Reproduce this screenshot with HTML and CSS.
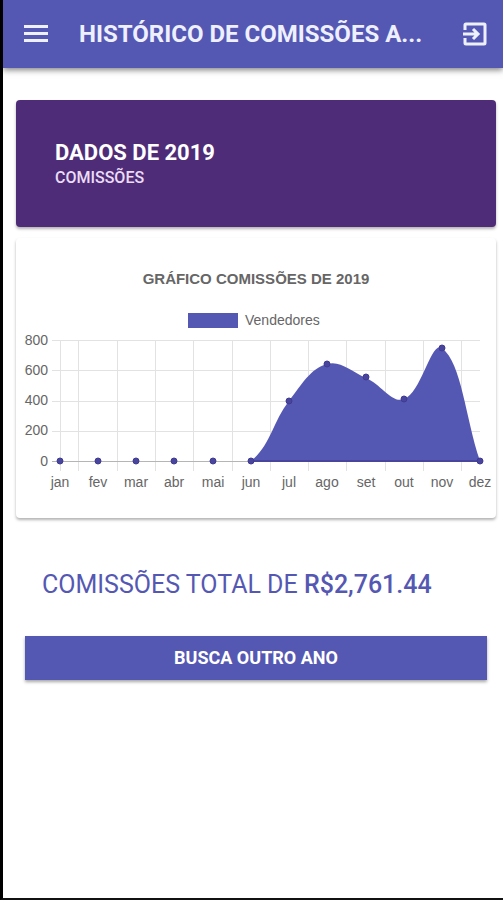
FILE: index.html
```html
<!DOCTYPE html>
<html lang="pt-BR">
<head>
    <meta charset="utf-8">
    <meta name="viewport" content="width=device-width, initial-scale=1">
    <title>Histórico de Comissões</title>
    <link rel="stylesheet" href="styles.css">
</head>
<body>

    <header class="toolbar">
        <button type="button" class="icon-button" aria-label="Menu">
            <svg width="24" height="24" viewBox="0 0 24 24">
                <path d="M0 3h24v3H0zM0 10h24v3H0zM0 17h24v3H0z" fill="currentColor"/>
            </svg>
        </button>
        <h1 class="title">HISTÓRICO DE COMISSÕES A...</h1>
        <button type="button" class="icon-button" aria-label="Sair">
            <svg width="24" height="24" viewBox="0 0 24 24" fill="none" stroke="currentColor" stroke-width="3">
                <path d="M2 8V3a1 1 0 0 1 1-1h18a1 1 0 0 1 1 1v18a1 1 0 0 1-1 1H3a1 1 0 0 1-1-1v-5"/>
                <path d="M0 12h15M10 7l5 5-5 5"/>
            </svg>
        </button>
    </header>

    <main class="content">
        <section class="card year-card">
            <h2>DADOS DE 2019</h2>
            <p>COMISSÕES</p>
        </section>

        <section class="card">
            <svg class="chart" viewBox="0 0 480 280" role="img" aria-label="Gráfico de comissões">
                <text class="chart-title" x="240" y="46">GRÁFICO COMISSÕES DE 2019</text>
                <rect class="area" x="172" y="75" width="50" height="15"/>
                <text x="229" y="87">Vendedores</text>

                <!-- grid -->
                <path class="grid" d="M36 102H464M36 132H464M36 163H464M36 193H464"/>
                <path class="grid" d="M44 102V233M62 102V233M101 102V233M139 102V233M177 102V233M216 102V233M254 102V233M292 102V233M330 102V233M369 102V233M407 102V233M445 102V233"/>
                <path class="grid zero" d="M36 223H464"/>

                <g class="y-labels">
                    <text x="32" y="107">800</text>
                    <text x="32" y="137">600</text>
                    <text x="32" y="167">400</text>
                    <text x="32" y="197">200</text>
                    <text x="32" y="228">0</text>
                </g>

                <!-- jun to dez -->
                <path class="area" d="M235 223C255 207 256 185 273 163C286 146 294 131 311 126C324 122 335 133 350 140C366 147 376 166 388 161C406 154 415 102 426 110C446 126 449 178 464 223Z"/>
                <path class="line" d="M235 223H464"/>
                <g class="points">
                    <circle cx="44" cy="223" r="3"/>
                    <circle cx="82" cy="223" r="3"/>
                    <circle cx="120" cy="223" r="3"/>
                    <circle cx="158" cy="223" r="3"/>
                    <circle cx="197" cy="223" r="3"/>
                    <circle cx="235" cy="223" r="3"/>
                    <circle cx="273" cy="163" r="3"/>
                    <circle cx="311" cy="126" r="3"/>
                    <circle cx="350" cy="139" r="3"/>
                    <circle cx="388" cy="161" r="3"/>
                    <circle cx="426" cy="110" r="3"/>
                    <circle cx="464" cy="223" r="3"/>
                </g>

                <g class="x-labels">
                    <text x="44" y="249">jan</text>
                    <text x="82" y="249">fev</text>
                    <text x="120" y="249">mar</text>
                    <text x="158" y="249">abr</text>
                    <text x="197" y="249">mai</text>
                    <text x="235" y="249">jun</text>
                    <text x="273" y="249">jul</text>
                    <text x="311" y="249">ago</text>
                    <text x="350" y="249">set</text>
                    <text x="388" y="249">out</text>
                    <text x="426" y="249">nov</text>
                    <text x="464" y="249">dez</text>
                </g>
            </svg>
        </section>

        <p class="total">COMISSÕES TOTAL DE <strong>R$2,761.44</strong></p>
        <button type="button" class="search-button">BUSCA OUTRO ANO</button>
    </main>

</body>
</html>
```

FILE: styles.css
```css
* {
    box-sizing: border-box;
}
body {
    margin: 0;
    min-height: 100vh;
    border-left: 3px solid #000;
    border-bottom: 2px solid #111;
    background: #fff;
    font-family: Roboto, sans-serif;
}
h1, h2, p {
    margin: 0;
}
button {
    border: 0;
    font-family: inherit;
    cursor: pointer;
}

/* top bar */
.toolbar {
    display: flex;
    align-items: center;
    height: 68px;
    padding: 0 16px 0 21px;
    background: #5558b3;
    color: #eef0ff;
    box-shadow: 0 2px 6px rgba(0, 0, 0, 0.5);
}
.icon-button {
    display: flex;
    padding: 0;
    background: none;
    color: inherit;
}
.title {
    flex: 1;
    margin-left: 31px;
    font-size: 24px;
    font-weight: 700;
    line-height: 32px;
    white-space: nowrap;
}

.content {
    padding: 32px 7px 20px 13px;
}
.card {
    margin-bottom: 11px;
    border-radius: 4px;
    background: #fff;
    box-shadow: 0 2px 3px rgba(0, 0, 0, 0.3);
}
.year-card {
    padding: 39px;
    background: #4f2c78;
    color: #fff;
}
.year-card h2 {
    font-size: 22px;
    font-weight: 700;
    line-height: 28px;
}
.year-card p {
    font-size: 16px;
    font-weight: 500;
    line-height: 21px;
    color: #eadcf5;
}

/* chart */
.chart {
    display: block;
    width: 100%;
    height: auto;
    font-family: "Liberation Sans", Arial, sans-serif;
    font-size: 14px;
    fill: #666;
}
.chart-title {
    font-size: 15px;
    font-weight: bold;
    text-anchor: middle;
}
.y-labels {
    text-anchor: end;
}
.x-labels {
    text-anchor: middle;
}
.grid {
    stroke: #e2e2e2;
    shape-rendering: crispEdges;
}
.zero {
    stroke: #b5b5b5;
}
.area {
    fill: #5558b3;
}
.line {
    stroke: #4a459c;
    stroke-width: 2;
}
.points {
    fill: #4a459c;
    stroke: #3f3a92;
}

.total {
    margin: 50px 26px 34px;
    font-size: 25px;
    line-height: 34px;
    color: #5558b3;
}
.total strong {
    font-weight: 500;
}
.search-button {
    display: block;
    width: calc(100% - 18px);
    height: 44px;
    margin: 0 9px;
    padding: 0 0 2px;
    background: #5558b3;
    color: #fff;
    font-size: 18px;
    font-weight: 700;
    box-shadow: 0 2px 3px rgba(0, 0, 0, 0.35);
}
```
